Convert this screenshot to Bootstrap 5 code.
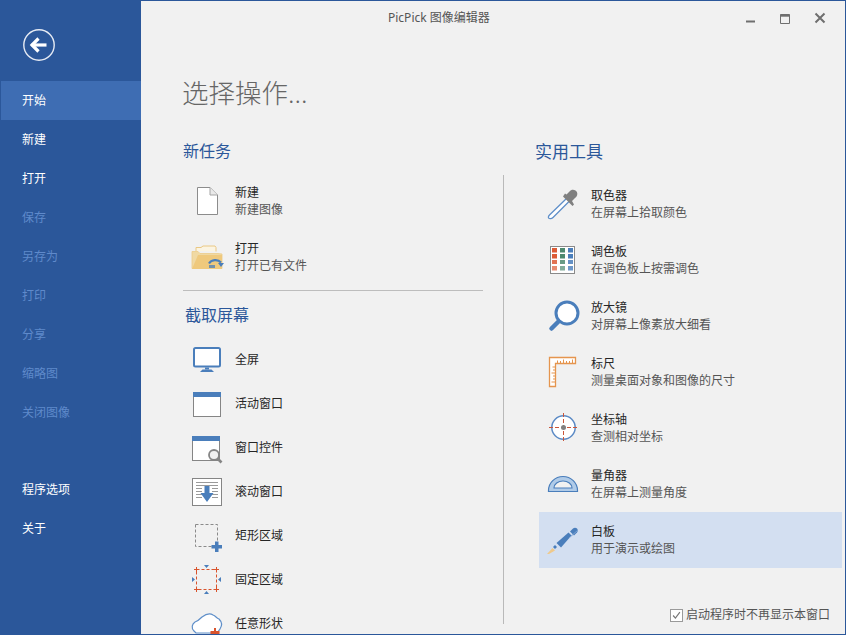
<!DOCTYPE html>
<html lang="zh">
<head>
<meta charset="utf-8">
<title>PicPick</title>
<link href="https://cdn.jsdelivr.net/npm/bootstrap@5.3.0/dist/css/bootstrap.min.css" rel="stylesheet">
<style>
html,body{height:635px;overflow:hidden;margin:0;background:#f1f1f1}
body{font-family:"Noto Sans","Noto Sans CJK SC",sans-serif;font-size:12px;color:#333}
.appwin{width:846px;height:635px;border:1px solid #2b579a;overflow:hidden;background:#f1f1f1}
.sidepane{width:140px;flex:none;background:#2b579a;padding-top:80px;position:relative}
.backbtn{position:absolute;left:22px;top:28px;line-height:0}
.sidepane .nav-link{height:39px;line-height:39px;padding:0 0 0 21px;color:#fff;font-size:12px}
.sidepane .nav-link.active-item{background:#3e6db3}
.sidepane .nav-link.disabled{color:#5f8acb}
.side-gap{height:38px}
.mainpane{min-width:0}
.titlebar{height:32px;position:relative}
.wintitle{padding:1px 0 0 247px;line-height:32px;color:#555;font-size:12px}
.winctl{position:absolute;right:0;top:0;line-height:0}
.bigtitle{margin:40px 0 0 41px;height:40px;line-height:40px;font-size:26.500px;font-weight:300;color:#666}
.colleft{width:362px;flex:none;padding:27px 20px 0 42px}
.colright{flex:1;min-width:0}
.grouphead{font-size:16px;line-height:22px;color:#2b579a;font-weight:400;margin:0 0 11px}
.colright .grouphead{font-size:17px;padding:28px 0 0 32px;height:62px;line-height:22px;margin:0}
.toolbody{border-left:1px solid #b9b9b9;height:449px;padding:1px 3px 0 35px}
.taskrow{height:56px}
.taskrow svg{flex:none;display:block}
.shotrow{height:44px}
.shotrow svg{flex:none;display:block}
.tname{color:#262626;line-height:17px}
.tsub{color:#555;line-height:17px}
.hilite{background:#d3dff1}
.sepline{border-top:1px solid #bdbdbd;margin:5px 0 0}
.shothead{font-size:16px;line-height:22px;color:#2b579a;font-weight:400;margin:13px 0 11px 2px}
.noshow{line-height:16px;color:#555;padding:0 12px 1px 0;min-height:0}
.noshow .form-check-input{width:13px;height:13px;margin:0 3px 0 0;border-radius:0;border:1px solid #9a9a9a;background-color:#fff;box-shadow:none;opacity:1;float:none;
background-image:url("data:image/svg+xml,%3csvg xmlns='http://www.w3.org/2000/svg' viewBox='0 0 13 13'%3e%3cpath fill='none' stroke='%23777' stroke-width='1.4' d='M2.5 6.5l2.7 3L10.5 2.5'/%3e%3c/svg%3e")}
</style>
</head>
<body>
<div class="appwin d-flex">
  <nav class="sidepane">
    <div class="backbtn"><svg width="32" height="32" viewBox="0 0 32 32"><circle cx="16" cy="16" r="15.200" fill="none" stroke="#e6ebf4" stroke-width="1.400"/><path d="M8.500 16H23.500" stroke="#fff" stroke-width="3.200"/><path d="M15.500 9.500L9 16l6.500 6.500" fill="none" stroke="#fff" stroke-width="3.200"/></svg></div>
    <div class="nav flex-column">
      <a class="nav-link active-item" href="#">开始</a>
      <a class="nav-link" href="#">新建</a>
      <a class="nav-link" href="#">打开</a>
      <a class="nav-link disabled" href="#">保存</a>
      <a class="nav-link disabled" href="#">另存为</a>
      <a class="nav-link disabled" href="#">打印</a>
      <a class="nav-link disabled" href="#">分享</a>
      <a class="nav-link disabled" href="#">缩略图</a>
      <a class="nav-link disabled" href="#">关闭图像</a>
      <div class="side-gap"></div>
      <a class="nav-link" href="#">程序选项</a>
      <a class="nav-link" href="#">关于</a>
    </div>
  </nav>
  <main class="mainpane flex-grow-1">
    <div class="titlebar">
      <div class="wintitle">PicPick 图像编辑器</div>
      <div class="winctl"><svg width="120" height="32" viewBox="726 1 120 32"><path d="M747 21.500h9" stroke="#6f6f6f" stroke-width="2"/><path d="M781.500 14.500h9v9h-9z" fill="none" stroke="#6f6f6f"/><path d="M781.500 15.500h9" stroke="#6f6f6f" stroke-width="2.400"/><path d="M816.500 13.500l9 9m0-9l-9 9" stroke="#6f6f6f" stroke-width="2"/></svg></div>
    </div>
    <div class="bigtitle">选择操作...</div>
    <div class="d-flex">
      <section class="colleft">
        <h2 class="grouphead">新任务</h2>
        <div class="taskrow d-flex align-items-center">
          <svg width="52" height="56" viewBox="183 173 52 56"><path d="M197.500 187.500H210l7.500 7.500v19.500h-20z" fill="#fff" stroke="#8c8c8c"/><path d="M210 187.500V195h7.500" fill="#e9e9e9" stroke="#a5a5a5"/></svg>
          <div><div class="tname">新建</div><div class="tsub">新建图像</div></div>
        </div>
        <div class="taskrow d-flex align-items-center">
          <svg width="52" height="56" viewBox="183 229 52 56"><path d="M196 251v-3.500h5l2 -1.500h12l1 1.500v4" fill="#fbf4e2" stroke="#eac884"/><path d="M192 268.500v-17h6l2 2h18l4 .5v14.500z" fill="#f0d9a3" stroke="#eccb89" stroke-width=".8"/><path d="M192 269l6 -14h24v14z" fill="#efc97d"/><path d="M209 263.500a7 6 0 0 1 12 -1" fill="none" stroke="#4a7ebb" stroke-width="2.200"/><path d="M218 263h6l-3 4z" fill="#4a7ebb"/><path d="M209 265h6v3h-6z" fill="#4a7ebb" opacity=".75"/></svg>
          <div><div class="tname">打开</div><div class="tsub">打开已有文件</div></div>
        </div>
        <div class="sepline"></div>
        <h2 class="shothead">截取屏幕</h2>
        <div class="shotrow d-flex align-items-center">
          <svg width="52" height="44" viewBox="183 337 52 44"><rect x="194" y="348" width="26" height="18.500" rx="1.500" fill="#fff" stroke="#4a7ebb" stroke-width="2"/><path d="M205 367.500h4v2h-4z" fill="#4a7ebb"/><path d="M200 372l2.500 -2.500h9l2.500 2.500z" fill="#4a7ebb"/></svg>
          <div class="tname">全屏</div>
        </div>
        <div class="shotrow d-flex align-items-center">
          <svg width="52" height="44" viewBox="183 381 52 44"><rect x="193.500" y="392.500" width="27" height="24" fill="#fff" stroke="#858585"/><rect x="193" y="392" width="28" height="5" fill="#4a7ebb"/></svg>
          <div class="tname">活动窗口</div>
        </div>
        <div class="shotrow d-flex align-items-center">
          <svg width="52" height="44" viewBox="183 425 52 44"><rect x="192.500" y="436.500" width="27" height="24" fill="#fff" stroke="#858585"/><rect x="192" y="436" width="28" height="5" fill="#4a7ebb"/><circle cx="214" cy="455" r="5" fill="#f1f1f1" stroke="#858585" stroke-width="1.800"/><path d="M217.500 458.500l4 4" stroke="#858585" stroke-width="2.600"/></svg>
          <div class="tname">窗口控件</div>
        </div>
        <div class="shotrow d-flex align-items-center">
          <svg width="52" height="44" viewBox="183 469 52 44"><rect x="192.500" y="478.500" width="29" height="27" fill="#fff" stroke="#858585"/><path d="M196 482.500h22m-22 3h22m-22 3h6m10 0h6m-22 3h6m10 0h6m-22 3h6m10 0h6m-22 3h6m10 0h6" stroke="#9a9a9a"/><path d="M204.500 486h5v7h4l-6.500 9 -6.500 -9h4z" fill="#4a7ebb"/></svg>
          <div class="tname">滚动窗口</div>
        </div>
        <div class="shotrow d-flex align-items-center">
          <svg width="52" height="44" viewBox="183 513 52 44"><rect x="195.500" y="524.500" width="22" height="22" fill="none" stroke="#8a8a8a" stroke-dasharray="3 2"/><path d="M215 541.500h3.500v3.500h3.500v3.500h-3.500v3.500H215v-3.500h-3.500V545h3.500z" fill="#4a7ebb"/></svg>
          <div class="tname">矩形区域</div>
        </div>
        <div class="shotrow d-flex align-items-center">
          <svg width="52" height="44" viewBox="183 557 52 44"><rect x="196.500" y="569.500" width="20" height="20" fill="none" stroke="#d9532c" stroke-dasharray="3 2"/><path d="M194 569.500h5m-2.500 -2.500v5m17.500 -2.500h5m-2.500 -2.500v5m-22.500 17.500h5m-2.500 -2.500v5m17.500 -2.500h5m-2.500 -2.500v5" stroke="#d9532c"/><path d="M204 565h5l-2.500 3zM204 594h5l-2.500 -3zM192 577v5l3 -2.500zM221 577v5l-3 -2.500z" fill="#4a7ebb"/></svg>
          <div class="tname">固定区域</div>
        </div>
        <div class="shotrow d-flex align-items-center">
          <svg width="52" height="44" viewBox="183 601 52 44"><path d="M194 631c-3 -3 -2 -7 1 -9 3 -1 5 -3 7 -5 4 -3 8 -4 11 -2 3 1 3 3 6 4 3 3 3 7 1 10 -1 2 -2 3 -4 4h-20z" fill="#fff" stroke="#5f8fc9" stroke-width="1.200"/><path d="M210.500 631h9v3h-9zM214 628h2v3h-2z" fill="#d9532c"/></svg>
          <div class="tname">任意形状</div>
        </div>
      </section>
      <section class="colright">
        <h2 class="grouphead">实用工具</h2>
        <div class="toolbody d-flex flex-column">
          <div class="taskrow d-flex align-items-center">
            <svg width="52" height="56" viewBox="539 176 52 56"><path d="M567 198l-17.500 17c-1.500 1.500 -1.500 3 0 3.500s2.500 0 3.500 -1l17 -17" fill="#fff" stroke="#5f8fc9" stroke-width="1.300"/><path d="M563 196.500l9.500 9.500 1.500 -1.500 -2 -3.500 3 -3c3 -2 3 -6 .5 -7.500 -2 -1.500 -4.500 -1 -6 1l-3 3 -1.500 -1z" fill="#808080"/></svg>
            <div><div class="tname">取色器</div><div class="tsub">在屏幕上拾取颜色</div></div>
          </div>
          <div class="taskrow d-flex align-items-center">
            <svg width="52" height="56" viewBox="539 232 52 56"><rect x="550.500" y="246.500" width="24" height="27" fill="#fff" stroke="#8a8a8a"/><g fill="#dd5b36"><rect x="552" y="248" width="5" height="4.500"/><rect x="552" y="254" width="5" height="4.500"/><rect x="552" y="260" width="5" height="4" opacity=".85"/><rect x="552" y="266" width="5" height="4.500" opacity=".7"/></g><g fill="#4d8a70"><rect x="560" y="248" width="5" height="4.500"/><rect x="560" y="254" width="5" height="4.500"/><rect x="560" y="260" width="5" height="4" opacity=".85"/><rect x="560" y="266" width="5" height="4.500" opacity=".7"/></g><g fill="#4a7ebb"><rect x="568" y="248" width="5" height="4.500"/><rect x="568" y="254" width="5" height="4.500"/><rect x="568" y="260" width="5" height="4" opacity=".85"/><rect x="568" y="266" width="5" height="4.500" opacity=".8"/></g></svg>
            <div><div class="tname">调色板</div><div class="tsub">在调色板上按需调色</div></div>
          </div>
          <div class="taskrow d-flex align-items-center">
            <svg width="52" height="56" viewBox="539 288 52 56"><circle cx="567" cy="313" r="11" fill="#fff" stroke="#4a7ebb" stroke-width="3"/><path d="M558.500 321.500l-7 7" stroke="#4a7ebb" stroke-width="4.500" stroke-linecap="round"/></svg>
            <div><div class="tname">放大镜</div><div class="tsub">对屏幕上像素放大细看</div></div>
          </div>
          <div class="taskrow d-flex align-items-center">
            <svg width="52" height="56" viewBox="539 344 52 56"><path d="M549.500 357.500h26v6h-20v23h-6z" fill="#fff" stroke="#e5954e" stroke-width="1.300"/><path d="M557.500 363v-2.500m3 2.500v-2m3 2v-3.500m3 3.500v-2m3 2v-2m3 2v-3.500M555 367h-2.500m2.500 3h-2m2 3h-3.500m3.500 3h-2m2 3h-2m2 3h-3.500" stroke="#e5954e"/></svg>
            <div><div class="tname">标尺</div><div class="tsub">测量桌面对象和图像的尺寸</div></div>
          </div>
          <div class="taskrow d-flex align-items-center">
            <svg width="52" height="56" viewBox="539 400 52 56"><circle cx="563.500" cy="427.500" r="11.700" fill="#fff" stroke="#5b8ac5" stroke-width="1.500"/><path d="M549 427.500h29M563.500 413v29" stroke="#c9553a" stroke-dasharray="4 2"/><circle cx="563.500" cy="427.500" r="2.500" fill="#808080"/></svg>
            <div><div class="tname">坐标轴</div><div class="tsub">查测相对坐标</div></div>
          </div>
          <div class="taskrow d-flex align-items-center">
            <svg width="52" height="56" viewBox="539 456 52 56"><path d="M548.500 491.500v-1a14.500 14 0 0 1 29 0v1z" fill="#b0cbe8" stroke="#4a7ebb" stroke-width="1.200"/><path d="M554 488a9 7 0 0 1 18 0z" fill="#f1f1f1" stroke="#4a7ebb" stroke-width="1.200"/></svg>
            <div><div class="tname">量角器</div><div class="tsub">在屏幕上测量角度</div></div>
          </div>
          <div class="taskrow hilite d-flex align-items-center">
            <svg width="52" height="56" viewBox="539 512 52 56"><path d="M547 554l5.500 -6 2.500 2.500 -6 3.500z" fill="#efc98b"/><path d="M553 547l2 -2 2 2 -2 2z" fill="#4a7ebb"/><path d="M556.500 543l12 -10.500 3 3 -10.500 12z" fill="#4a7ebb"/><path d="M570 531.500l3 -3c1 -1 3 -1 4 0s1 3 0 4l-3 3z" fill="#4a7ebb"/><path d="M569 538l9 -8" stroke="#7ea3d2"/></svg>
            <div><div class="tname">白板</div><div class="tsub">用于演示或绘图</div></div>
          </div>
          <div class="noshow form-check d-flex justify-content-end align-items-center mt-auto mb-0">
            <input class="form-check-input" type="checkbox" checked id="noshow">
            <label class="form-check-label" for="noshow">启动程序时不再显示本窗口</label>
          </div>
        </div>
      </section>
    </div>
  </main>
</div>
</body>
</html>
